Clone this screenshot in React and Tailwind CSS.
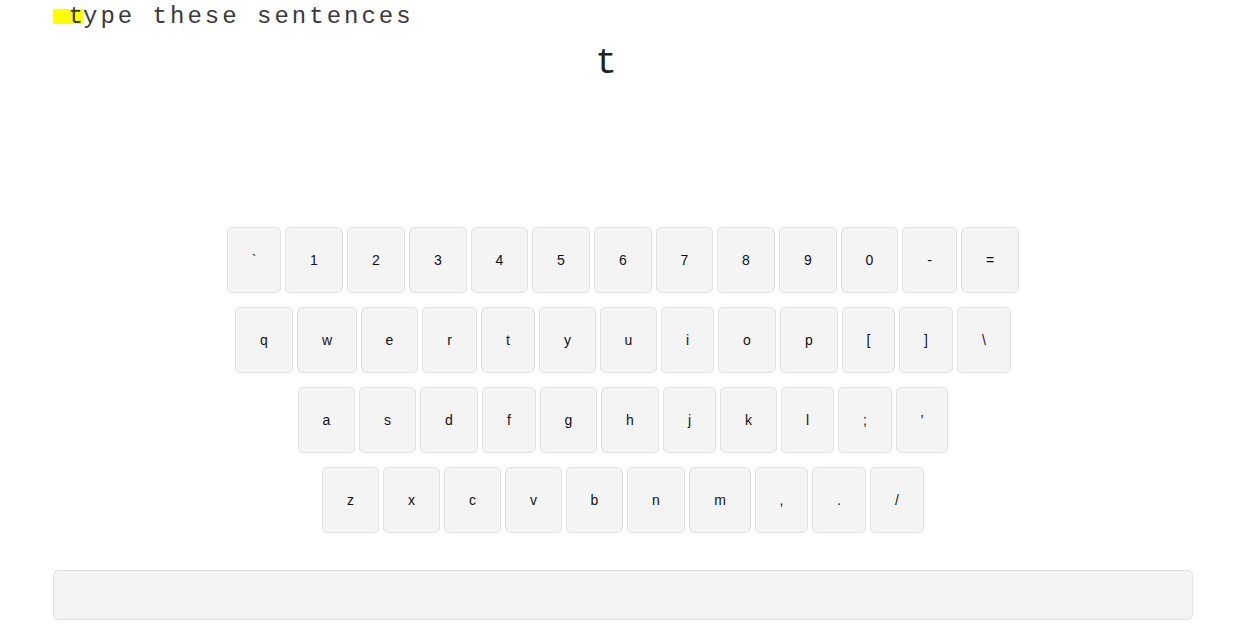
const rows = [
  [
    ["`", "w-[54px]"], ["1", "w-[58px]"], ["2", "w-[58px]"], ["3", "w-[58px]"], ["4", "w-[57px]"],
    ["5", "w-[58px]"], ["6", "w-[58px]"], ["7", "w-[57px]"], ["8", "w-[58px]"], ["9", "w-[58px]"],
    ["0", "w-[57px]"], ["-", "w-[55px]"], ["=", "w-[58px]"],
  ],
  [
    ["q", "w-[58px]"], ["w", "w-[60px]"], ["e", "w-[57px]"], ["r", "w-[55px]"], ["t", "w-[54px]"],
    ["y", "w-[57px]"], ["u", "w-[57px]"], ["i", "w-[53px]"], ["o", "w-[58px]"], ["p", "w-[58px]"],
    ["[", "w-[53px]"], ["]", "w-[54px]"], ["\\", "w-[54px]"],
  ],
  [
    ["a", "w-[57px]"], ["s", "w-[57px]"], ["d", "w-[58px]"], ["f", "w-[54px]"], ["g", "w-[57px]"],
    ["h", "w-[58px]"], ["j", "w-[53px]"], ["k", "w-[57px]"], ["l", "w-[53px]"], [";", "w-[54px]"],
    ["'", "w-[52px]"],
  ],
  [
    ["z", "w-[57px]"], ["x", "w-[57px]"], ["c", "w-[57px]"], ["v", "w-[57px]"], ["b", "w-[57px]"],
    ["n", "w-[58px]"], ["m", "w-[62px]"], [",", "w-[53px]"], [".", "w-[54px]"], ["/", "w-[54px]"],
  ],
];

function Key({ label, width }) {
  return (
    <div
      className={`${width} h-[66px] flex items-center justify-center bg-[#f4f4f4] border border-[#e2e2e2] rounded-[5px] text-[14px] text-[#111] font-['Liberation_Sans',Arial,sans-serif]`}
    >
      {label}
    </div>
  );
}

export default function App() {
  return (
    <div className="min-h-screen bg-white">
      <div className="ml-[53px] w-[1140px]">
        <div className="pt-[3px] text-[24px] leading-[27px] tracking-[3px] text-[#3a3a3a] font-['Liberation_Mono','Courier_New',monospace] whitespace-pre">
          <span className="inline-block w-[30px] h-[15px] leading-[15px] tracking-[1px] bg-[#ffff00] whitespace-pre"> t</span>ype these sentences
        </div>
        <div className="mt-[14px] h-[40px] pr-[34px] text-center text-[36px] leading-[40px] text-[#222] font-['Liberation_Mono','Courier_New',monospace]">
          t
        </div>
        <div className="mt-[143px] flex flex-col gap-[14px]">
          {rows.map((row, i) => (
            <div key={i} className="flex justify-center gap-[4px]">
              {row.map(([label, width]) => (
                <Key key={label} label={label} width={width} />
              ))}
            </div>
          ))}
        </div>
        <div className="mt-[37px] h-[50px] bg-[#f4f4f4] border border-[#e2e2e2] rounded-[5px]"></div>
      </div>
    </div>
  );
}
